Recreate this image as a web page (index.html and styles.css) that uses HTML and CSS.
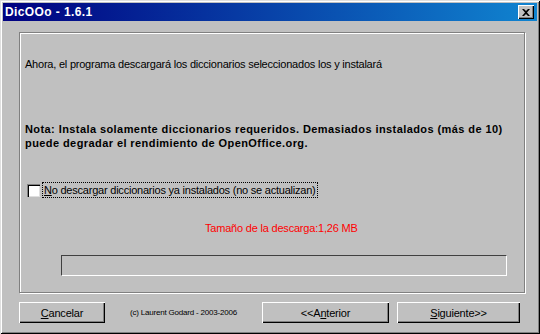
FILE: index.html
```html
<!DOCTYPE html>
<html lang="es">
<head>
	<meta charset="UTF-8">
	<title>DicOOo - 1.6.1</title>
	<link rel="stylesheet" href="styles.css">
</head>
<body>
	<div class="window">
		<div class="titlebar">
			<span class="title">DicOOo - 1.6.1</span>
			<div class="close">
				<svg width="8" height="7" viewBox="0 0 8 7"><path d="M0 0h2l2 2 2-2h2L5 3.5 8 7H6L4 5 2 7H0l3-3.5z" fill="#000"/></svg>
			</div>
		</div>
		<div class="content">
			<div class="frame">
				<p class="intro">Ahora, el programa descargará los diccionarios seleccionados los y instalará</p>
				<p class="note">Nota: Instala solamente diccionarios requeridos. Demasiados instalados (más de 10)<br>puede degradar el rendimiento de OpenOffice.org.</p>
				<label class="check">
					<span class="box"></span>
					<span class="focus"><u>N</u>o descargar diccionarios ya instalados (no se actualizan)</span>
				</label>
				<p class="size">Tamaño de la descarga:1,26 MB</p>
				<div class="progress"></div>
			</div>
			<div class="buttons">
				<button class="btn btn-cancel"><u>C</u>ancelar</button>
				<span class="copy">(c) Laurent Godard - 2003-2006</span>
				<button class="btn btn-prev">&lt;&lt;A<u>n</u>terior</button>
				<button class="btn btn-next"><u>S</u>iguiente&gt;&gt;</button>
			</div>
		</div>
	</div>
</body>
</html>
```

FILE: styles.css
```css
* {
	margin: 0;
	padding: 0;
	box-sizing: border-box;
}
body {
	width: 540px;
	height: 334px;
	overflow: hidden;
	background: #c0c0c0;
	font-family: "Liberation Sans", Arial, sans-serif;
	font-size: 11px;
	color: #000;
}
.window {
	width: 540px;
	height: 334px;
	background: #c0c0c0;
	padding: 3px;
	box-shadow: inset 1px 1px #dfdfdf, inset -1px -1px #000, inset 2px 2px #fff, inset -2px -2px #808080;
	display: flex;
	flex-direction: column;
}
.titlebar {
	height: 18px;
	background: linear-gradient(to right, #000080, #1084d0);
	display: flex;
	align-items: center;
	justify-content: space-between;
	padding: 0 3px 0 2px;
}
.title {
	color: #fff;
	font-weight: bold;
	font-size: 12px;
	letter-spacing: 0.4px;
}
.close {
	width: 16px;
	height: 14px;
	background: #c0c0c0;
	box-shadow: inset 1px 1px #fff, inset -1px -1px #000, inset -2px -2px #808080;
	display: flex;
	align-items: center;
	justify-content: center;
	padding-right: 1px;
}
.content {
	flex: 1;
	padding: 11px 12px 0 16px;
	display: flex;
	flex-direction: column;
}
.frame {
	width: 506px;
	height: 261px;
	border: 1px solid #808080;
	box-shadow: inset 1px 1px #fff, 1px 1px #fff;
	padding: 25px 0 0 5px;
	display: flex;
	flex-direction: column;
}
.intro {
	line-height: 13px;
	letter-spacing: -0.22px;
}
.note {
	margin-top: 51px;
	font-weight: bold;
	line-height: 14px;
	letter-spacing: 0.42px;
}
.check {
	margin-top: 33px;
	margin-left: 2px;
	display: flex;
	align-items: center;
	gap: 3px;
}
.box {
	width: 13px;
	height: 13px;
	background: #fff;
	box-shadow: inset 1px 1px #808080, inset 2px 2px #000, inset -1px -1px #dfdfdf;
}
.focus {
	outline: 1px dotted #000;
	padding: 0 1px;
	line-height: 14px;
	letter-spacing: -0.22px;
}
.focus u,
.btn u {
	text-decoration: underline;
}
.size {
	margin-top: 25px;
	margin-left: 180px;
	color: #f00;
	line-height: 13px;
	letter-spacing: -0.2px;
}
.progress {
	margin-top: 20px;
	margin-left: 36px;
	width: 446px;
	height: 21px;
	border-top: 1px solid #404040;
	border-left: 1px solid #404040;
	border-right: 1px solid #fff;
	border-bottom: 1px solid #fff;
}
.buttons {
	margin-top: 9px;
	display: flex;
	align-items: center;
}
.btn {
	height: 21px;
	background: #c0c0c0;
	border: none;
	font-family: "Liberation Sans", Arial, sans-serif;
	font-size: 11px;
	color: #000;
	box-shadow: inset 1px 1px #fff, inset -1px -1px #000, inset -2px -2px #808080;
	letter-spacing: -0.2px;
}
.btn-cancel {
	width: 86px;
}
.copy {
	margin-left: 25px;
	font-size: 8px;
	width: 132px;
	letter-spacing: -0.2px;
}
.btn-prev {
	width: 127px;
}
.btn-next {
	width: 123px;
	margin-left: 8px;
}
```
